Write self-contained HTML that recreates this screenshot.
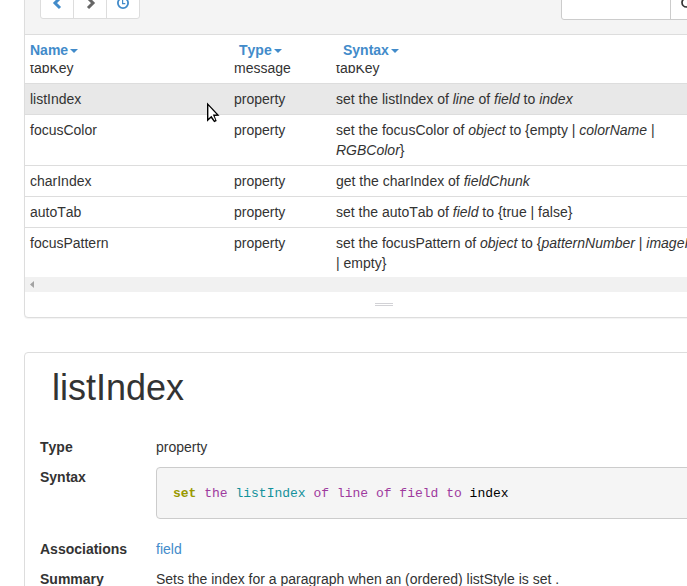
<!DOCTYPE html>
<html><head><meta charset="utf-8">
<style>
html,body{margin:0;padding:0;width:687px;height:586px;overflow:hidden;background:#fff;}
body{font-kerning:none;font-family:"Liberation Sans",sans-serif;font-size:14px;line-height:20px;color:#333;position:relative;}
.a{position:absolute;white-space:nowrap;}
.panel1{position:absolute;left:24px;top:-10px;width:700px;height:326px;border:1px solid #ddd;border-radius:4px;background:#fff;box-shadow:0 1px 1px rgba(0,0,0,.05);}
.toolbar{position:absolute;left:25px;top:0;width:700px;height:34px;background:#f4f4f4;border-bottom:1px solid #ddd;}
.btngrp{position:absolute;left:40px;top:-10px;width:98px;height:27px;border:1px solid #ddd;border-radius:3px;background:#fff;}
.div1{position:absolute;top:-10px;width:1px;height:28px;background:#ddd;}
.search{position:absolute;left:561px;top:-10px;width:200px;height:28px;border:1px solid #ccc;border-radius:3px;background:#fff;}
.th{position:absolute;top:40px;font-weight:bold;color:#428bca;}
.caret{display:inline-block;width:0;height:0;border-top:4px solid #428bca;border-left:4px solid transparent;border-right:4px solid transparent;vertical-align:middle;margin-left:2px;position:relative;top:0px;}
.body{position:absolute;left:25px;top:65px;width:662px;height:212px;overflow:hidden;}
.row{position:absolute;left:0;width:662px;border-top:1px solid #ddd;}
.row .c{position:absolute;top:5px;white-space:nowrap;}
.hl{background:#e8e8e8;}
.sb{position:absolute;left:25px;top:277px;width:662px;height:15px;background:#f1f1f1;}
.panel2{position:absolute;left:24px;top:352px;width:700px;height:300px;border:1px solid #ddd;border-radius:4px;background:#fff;}
.lbl{position:absolute;left:40px;font-weight:bold;}
.val{position:absolute;left:156px;}
pre{position:absolute;left:156px;top:467px;width:600px;height:50px;margin:0;border:1px solid #ccc;border-radius:4px;background:#f5f5f5;font-family:"Liberation Mono",monospace;font-size:13px;line-height:20px;color:#000;}
.k1{color:#999900;font-weight:bold;}
.k2{color:#9e3a9e;}
.k3{color:#13919b;}
</style></head><body>
<div class="panel1"></div>
<div class="toolbar"></div>
<div class="btngrp"></div>
<div class="div1" style="left:73px"></div>
<div class="div1" style="left:106px"></div>
<svg class="a" style="left:0;top:0" width="687" height="30">
  <path d="M60 -2 L55 3 L60 8" fill="none" stroke="#428bca" stroke-width="3"/>
  <path d="M88 -2 L93 3 L88 8" fill="none" stroke="#666" stroke-width="3"/>
  <circle cx="123" cy="3" r="5.1" fill="none" stroke="#428bca" stroke-width="1.8"/>
  <path d="M122.6 -1 V3.6 H125.3" fill="none" stroke="#428bca" stroke-width="1.2"/>
</svg>
<div class="search"></div>
<div class="div1" style="left:670px;height:29px;background:#ccc"></div>
<svg class="a" style="left:0;top:0" width="687" height="30">
  <circle cx="686.5" cy="2.5" r="4.5" fill="none" stroke="#333" stroke-width="1.7"/>
</svg>

<div class="th" style="left:30px">Name<span class="caret"></span></div>
<div class="th" style="left:239px">Type<span class="caret"></span></div>
<div class="th" style="left:343px">Syntax<span class="caret"></span></div>

<div class="body">
  <div class="row" style="top:-13px;height:30px"><span class="c" style="left:5px">tabKey</span><span class="c" style="left:209px">message</span><span class="c" style="left:311px">tabKey</span></div>
  <div class="row hl" style="top:18px;height:30px"><span class="c" style="left:5px">listIndex</span><span class="c" style="left:209px">property</span><span class="c" style="left:311px">set the listIndex of <i>line</i> of <i>field</i> to <i>index</i></span></div>
  <div class="row" style="top:49px;height:50px"><span class="c" style="left:5px">focusColor</span><span class="c" style="left:209px">property</span><span class="c" style="left:311px">set the focusColor of <i>object</i> to {empty | <i>colorName</i> |<br><i>RGBColor</i>}</span></div>
  <div class="row" style="top:100px;height:30px"><span class="c" style="left:5px">charIndex</span><span class="c" style="left:209px">property</span><span class="c" style="left:311px">get the charIndex of <i>fieldChunk</i></span></div>
  <div class="row" style="top:131px;height:30px"><span class="c" style="left:5px">autoTab</span><span class="c" style="left:209px">property</span><span class="c" style="left:311px">set the autoTab of <i>field</i> to {true | false}</span></div>
  <div class="row" style="top:162px;height:50px"><span class="c" style="left:5px">focusPattern</span><span class="c" style="left:209px">property</span><span class="c" style="left:311px">set the focusPattern of <i>object</i> to {<i>patternNumber</i> | <i>imageID</i><br>| empty}</span></div>
</div>
<div class="sb"></div>
<svg class="a" style="left:0;top:270px" width="40" height="30">
  <path d="M34 11 L30 14.5 L34 18 Z" fill="#a3a3a3"/>
</svg>
<div class="a" style="left:375px;top:303px;width:18px;height:1px;background:#d2d2d6"></div>
<div class="a" style="left:375px;top:305px;width:18px;height:1px;background:#d2d2d6"></div>

<div class="panel2"></div>
<div class="a" style="left:52px;top:368px;font-size:36px;line-height:40px">listIndex</div>

<div class="lbl" style="top:437px">Type</div>
<div class="val" style="top:437px">property</div>
<div class="lbl" style="top:467px">Syntax</div>
<pre><span class="a" style="left:16px;top:16px"><span class="k1">set</span> <span class="k2">the</span> <span class="k3">listIndex</span> <span class="k2">of</span> <span class="k2">line</span> <span class="k2">of</span> <span class="k2">field</span> <span class="k2">to</span> index</span></pre>
<div class="lbl" style="top:539px">Associations</div>
<div class="val" style="top:539px;color:#428bca">field</div>
<div class="lbl" style="top:569px">Summary</div>
<div class="val" style="top:569px">Sets the index for a paragraph when an (ordered) listStyle is set .</div>

<svg class="a" style="left:200px;top:98px" width="25" height="28">
  <path d="M7.0 4.6 L7.0 23.8 L11.0 20.0 L14.2 24.3 L16.7 22.9 L14.7 18.0 L19.5 17.7 Z" fill="#000"/>
  <path d="M8.4 7.7 L8.4 20.6 L11.4 17.7 L14.6 22.4 L15.3 22.1 L12.8 16.5 L16.6 16.4 Z" fill="#fff"/>
</svg>
</body></html>
